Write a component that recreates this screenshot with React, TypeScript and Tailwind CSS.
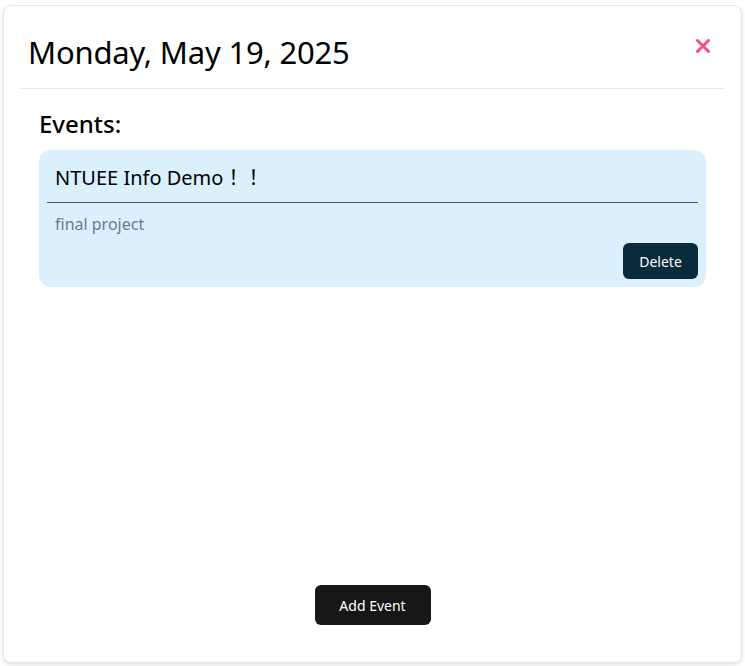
import React from 'react';

const font = { fontFamily: '"Noto Sans", "Noto Sans CJK TC", sans-serif' };

const App: React.FC = () => {
  return (
    <div className="h-[666px] w-full bg-white overflow-hidden flex" style={font}>
      <div className="mt-[5px] ml-[3px] w-[739px] h-[658px] bg-white border border-gray-200 rounded-lg shadow-[0_2px_4px_rgba(0,0,0,0.12)] flex flex-col">
        {/* Header */}
        <div className="mx-4 pt-[24px] pb-[14px] pl-[8px] pr-[11px] flex items-start justify-between border-b border-gray-200">
          <h1 className="text-[31px] leading-[44px] text-black tracking-[-0.2px]">Monday, May 19, 2025</h1>
          <button className="mt-[5px] p-1 text-[#f0527e]">
            <svg width="14" height="14" viewBox="0 0 14 14" fill="none">
              <path d="M1.5 1.5L12.5 12.5M12.5 1.5L1.5 12.5" stroke="currentColor" strokeWidth="3" strokeLinecap="round" />
            </svg>
          </button>
        </div>

        {/* Body */}
        <div className="flex-1 px-[35px] pt-[19px] flex flex-col">
          <h2 className="text-[24px] leading-[32px] text-black font-medium mb-[10px]">Events:</h2>
          <div className="bg-[#daf0fd] rounded-xl px-2 pt-[13px] pb-2">
            <div className="border-b border-[#4b5563] pl-2 pb-[9px]">
              <p className="text-[20px] leading-[30px] text-black">NTUEE Info Demo！！</p>
            </div>
            <p className="pl-2 pt-[10px] text-[16px] leading-[22px] text-[#6b7b8c]">final project</p>
            <div className="flex justify-end mt-[8px]">
              <button className="h-9 w-[75px] rounded-md bg-[#0a2b3b] text-white text-[14px]">Delete</button>
            </div>
          </div>
          <div className="flex-1" />
          <div className="flex justify-center mb-[37px]">
            <button className="h-10 w-[116px] rounded-md bg-[#171717] text-white text-[14px]">Add Event</button>
          </div>
        </div>
      </div>
    </div>
  );
};

export default App;
